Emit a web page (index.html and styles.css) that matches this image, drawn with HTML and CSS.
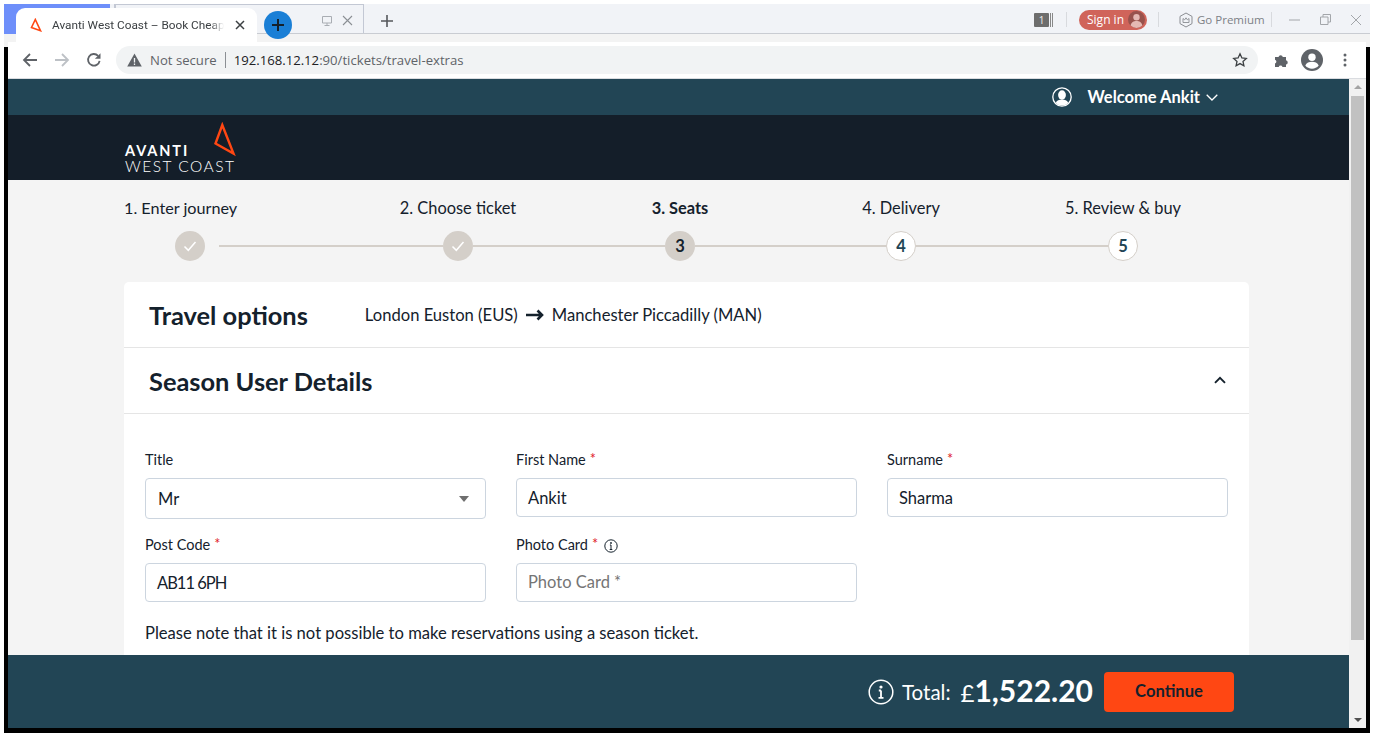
FILE: index.html
```html
<!DOCTYPE html>
<html lang="en">
<head>
    <meta charset="UTF-8">
    <title>Avanti West Coast – Book Cheap Train Tickets</title>
    <link rel="stylesheet" href="styles.css">
</head>
<body>
<div class="window">

    <div class="tabstrip">
        <div class="blue-edge"></div>
        <div class="back-tab">
            <svg class="ico-monitor" width="12" height="12" viewBox="0 0 12 12"><path d="M1.500 1.500h9v6.500h-9zM6 8v2.500M3.500 10.500h5" fill="none" stroke="#a9adb3"/></svg>
            <svg class="ico-x" width="11" height="11" viewBox="0 0 11 11"><path d="M1 1l9 9M10 1l-9 9" stroke="#8b8f94" stroke-width="1.100"/></svg>
        </div>
        <svg class="ico-plus" width="14" height="14" viewBox="0 0 14 14"><path d="M7 1v12M1 7h12" stroke="#55585c" stroke-width="1.600"/></svg>

        <div class="strip-right">
            <div class="count-badge"><span>1</span><i></i><i></i></div>
            <div class="strip-sep"></div>
            <div class="signin">Sign in
                <svg width="17" height="17" viewBox="0 0 17 17"><circle cx="8.500" cy="8.500" r="8.500" fill="#98524c"/><circle cx="8.500" cy="6.300" r="3.200" fill="#e5b9b3"/><path d="M2.600 14.500c.6-3.400 3-4.600 5.900-4.600s5.300 1.200 5.900 4.600a8.500 8.500 0 0 1-11.800 0z" fill="#e5b9b3"/></svg>
            </div>
            <div class="strip-sep sep-b"></div>
            <svg class="ico-premium" width="16" height="16" viewBox="0 0 16 16"><path d="M8 1l6 3.400v7.200L8 15l-6-3.400V4.400z" fill="none" stroke="#8a8d92"/><path d="M5 10.500V6.500l1.700 1.300L8 5.800l1.300 2L11 6.500v4z" fill="none" stroke="#8a8d92" stroke-width=".9"/></svg>
            <span class="premium">Go Premium</span>
            <div class="strip-sep sep-c"></div>
            <svg class="win-min" width="11" height="11" viewBox="0 0 11 11"><path d="M0 6h11" stroke="#a3a6aa"/></svg>
            <svg class="win-max" width="11" height="11" viewBox="0 0 11 11"><path d="M.5 3h7.500v7.500H.5zM3 3V.5h7.500V8H8" fill="none" stroke="#a3a6aa"/></svg>
            <svg class="win-close" width="12" height="12" viewBox="0 0 12 12"><path d="M1 1l10 10M11 1L1 11" stroke="#a3a6aa"/></svg>
        </div>

        <div class="active-tab">
            <svg class="favicon" width="12" height="14" viewBox="0 0 12 14"><path d="M5.300 1.500L1.500 9.500l9 3.200z" fill="none" stroke="#ff4713" stroke-width="1.600"/></svg>
            <span class="tab-title">Avanti West Coast – Book Cheap</span>
            <svg class="tab-close" width="10" height="10" viewBox="0 0 10 10"><path d="M1 1l8 8M9 1L1 9" stroke="#3c4043" stroke-width="1.500"/></svg>
        </div>
        <div class="blue-plus">
            <svg width="14" height="14" viewBox="0 0 14 14"><path d="M7 1v12M1 7h12" stroke="#14212c" stroke-width="2"/></svg>
        </div>
    </div>
    <div class="strip-band"></div>

    <div class="browser">
        <div class="toolbar">
            <svg class="nav-ico" width="16" height="16" viewBox="0 0 16 16"><path d="M15 8H2M8 2L2 8l6 6" fill="none" stroke="#5f6368" stroke-width="1.800"/></svg>
            <svg class="nav-ico" width="16" height="16" viewBox="0 0 16 16"><path d="M1 8h13M8 2l6 6-6 6" fill="none" stroke="#bdc1c6" stroke-width="1.800"/></svg>
            <svg class="nav-ico" width="16" height="16" viewBox="0 0 16 16"><path d="M13.600 8.800A5.800 5.800 0 1 1 12.100 3.800" fill="none" stroke="#5f6368" stroke-width="1.800"/><path d="M14.500 1.200v5.600H8.900z" fill="#5f6368"/></svg>
            <div class="omnibox">
                <svg width="15" height="14" viewBox="0 0 15 14"><path d="M7.500 .5L14.800 13.500H.2z" fill="#5f6368"/><path d="M7.500 5v4.500M7.500 10.500v1.500" stroke="#f1f3f4" stroke-width="1.300"/></svg>
                <span class="not-secure">Not secure</span>
                <span class="omni-sep"></span>
                <span class="url"><b>192.168.12.12</b>:90/tickets/travel-extras</span>
                <svg class="star" width="16" height="16" viewBox="0 0 16 16"><path d="M8 1.800l1.900 4.100 4.400.5-3.300 3 .9 4.400L8 11.600l-3.900 2.200.9-4.400-3.300-3 4.400-.5z" fill="none" stroke="#3c4043" stroke-width="1.300"/></svg>
            </div>
            <svg class="puzzle" width="16" height="16" viewBox="0 0 16 16"><path d="M1 5h3.500a2.200 2.200 0 0 1 4.300 0H12v3.300a2.200 2.200 0 0 1 0 4.300V15H8.500a2 2 0 0 0-3.800 0H1v-3.500a2 2 0 0 0 0-3.800z" fill="#5f6368"/></svg>
            <svg class="avatar" width="22" height="22" viewBox="0 0 22 22"><circle cx="11" cy="11" r="11" fill="#5f6368"/><circle cx="11" cy="8.300" r="3.700" fill="#fff"/><path d="M4.300 16.500c1-2.700 4-3.700 6.700-3.700s5.700 1 6.700 3.700a8.700 8.700 0 0 1-13.400 0z" fill="#fff"/></svg>
            <svg class="dots" width="4" height="14" viewBox="0 0 4 14"><circle cx="2" cy="2" r="1.500" fill="#5f6368"/><circle cx="2" cy="7" r="1.500" fill="#5f6368"/><circle cx="2" cy="12" r="1.500" fill="#5f6368"/></svg>
        </div>

        <div class="viewport">
            <div class="page">
                <div class="topbar">
                    <svg width="20" height="20" viewBox="0 0 20 20"><circle cx="10" cy="10" r="9.200" fill="#224555" stroke="#fff" stroke-width="1.300"/><ellipse cx="10" cy="8" rx="3.900" ry="4.700" fill="#fff"/><path d="M3.700 16c1-2.600 3.500-3.500 6.300-3.500s5.300.9 6.300 3.500a9 9 0 0 1-12.600 0z" fill="#fff"/></svg>
                    <span class="welcome">Welcome Ankit</span>
                    <svg width="12" height="7" viewBox="0 0 12 7"><path d="M.7 .7L6 6l5.300-5.300" fill="none" stroke="#fff" stroke-width="1.300"/></svg>
                </div>
                <div class="brandbar">
                    <div class="logo">
                        <div class="logo-text">
                            <span class="logo-avanti">AVANTI</span>
                            <span class="logo-west">WEST COAST</span>
                        </div>
                        <svg class="logo-mark" width="24" height="36" viewBox="0 0 24 36"><path d="M9.300 3L2.500 21.500 20.500 31.500z" fill="none" stroke="#ff4713" stroke-width="2.400"/></svg>
                    </div>
                </div>

                <div class="content">
                    <div class="steps">
                        <div class="step step-first">
                            <div class="step-label">1. Enter journey</div>
                            <div class="step-track">
                                <span class="dot done"><svg width="14" height="12" viewBox="0 0 14 12"><path d="M1.500 6.500l3.800 3.800L12.500 2" fill="none" stroke="#fff" stroke-width="1.500"/></svg></span>
                                <span class="line"></span>
                            </div>
                        </div>
                        <div class="step">
                            <div class="step-label">2. Choose ticket</div>
                            <div class="step-track">
                                <span class="line"></span>
                                <span class="dot done"><svg width="14" height="12" viewBox="0 0 14 12"><path d="M1.500 6.500l3.800 3.800L12.500 2" fill="none" stroke="#fff" stroke-width="1.500"/></svg></span>
                                <span class="line"></span>
                            </div>
                        </div>
                        <div class="step step-current">
                            <div class="step-label current">3. Seats</div>
                            <div class="step-track">
                                <span class="line"></span>
                                <span class="dot active">3</span>
                                <span class="line"></span>
                            </div>
                        </div>
                        <div class="step">
                            <div class="step-label">4. Delivery</div>
                            <div class="step-track">
                                <span class="line"></span>
                                <span class="dot todo">4</span>
                                <span class="line"></span>
                            </div>
                        </div>
                        <div class="step">
                            <div class="step-label">5. Review &amp; buy</div>
                            <div class="step-track">
                                <span class="line"></span>
                                <span class="dot todo">5</span>
                                <span class="line blank"></span>
                            </div>
                        </div>
                    </div>

                    <div class="card">
                        <div class="card-row">
                            <h2>Travel options</h2>
                            <div class="route">
                                <span>London Euston (EUS)</span>
                                <svg width="18" height="12" viewBox="0 0 18 12"><path d="M0 6h16M11.500 1.500L16 6l-4.500 4.500" fill="none" stroke="#14212c" stroke-width="2.600"/></svg>
                                <span>Manchester Piccadilly (MAN)</span>
                            </div>
                        </div>
                        <div class="card-row row-between">
                            <h2>Season User Details</h2>
                            <svg class="collapse" width="12" height="8" viewBox="0 0 12 8"><path d="M1 6.800l5-5 5 5" fill="none" stroke="#14212c" stroke-width="1.900"/></svg>
                        </div>
                        <form class="form">
                            <div class="field">
                                <label>Title</label>
                                <div class="input select"><span>Mr</span><i class="caret"></i></div>
                            </div>
                            <div class="field">
                                <label>First Name <em>*</em></label>
                                <div class="input">Ankit</div>
                            </div>
                            <div class="field">
                                <label>Surname <em>*</em></label>
                                <div class="input">Sharma</div>
                            </div>
                            <div class="field">
                                <label>Post Code <em>*</em></label>
                                <div class="input tight">AB11 6PH</div>
                            </div>
                            <div class="field">
                                <label>Photo Card <em>*</em>
                                    <svg class="label-info" width="14" height="14" viewBox="0 0 14 14"><circle cx="7" cy="7" r="6.200" fill="none" stroke="#14212c"/><path d="M7 6v4.300M5.700 10.500h2.600M5.900 6h1.100" fill="none" stroke="#14212c"/><circle cx="7" cy="4" r=".9" fill="#14212c"/></svg>
                                </label>
                                <div class="input placeholder">Photo Card *</div>
                            </div>
                            <p class="note">Please note that it is not possible to make reservations using a season ticket.</p>
                        </form>
                    </div>
                </div>

                <div class="totalbar">
                    <svg width="26" height="26" viewBox="0 0 26 26"><circle cx="13" cy="13" r="11.800" fill="none" stroke="#fff" stroke-width="1.500"/><circle cx="13" cy="8" r="1.600" fill="#fff"/><path d="M13 11.500v7M10.500 18.800h5M10.800 11.500H13" fill="none" stroke="#fff" stroke-width="1.800"/></svg>
                    <span class="total-label">Total:</span>
                    <span class="total-amount"><span class="pound">£</span>1,522.20</span>
                    <button class="continue" type="button">Continue</button>
                </div>
            </div>

            <div class="scrollbar">
                <i class="arrow-up"></i>
                <div class="thumb"></div>
                <i class="arrow-down"></i>
            </div>
        </div>
    </div>
</div>
</body>
</html>
```

FILE: styles.css
```css
* { box-sizing: border-box; }
html, body { margin: 0; height: 100%; overflow: hidden; background: #fff; }
body { font-family: "Lato", "Open Sans", sans-serif; color: #14212c; padding: 4px 4px 3px 4px; }
svg { display: block; flex: none; }
.window { width: 1366px; height: 729px; display: flex; flex-direction: column; }

/* tab strip */
.tabstrip { position: relative; height: 30px; flex: none; display: flex; background: #f1f3f7; border-bottom: 1px solid #c9ccd2; font-family: "Open Sans", sans-serif; }
.blue-edge { width: 106px; height: 30px; background: #6e8ffa; }
.back-tab { width: 250px; margin-left: 4px; border: 1px solid #c3c8d4; border-bottom: 0; border-left-width: 2px; display: flex; align-items: center; padding: 3px 0 0 205px; gap: 9px; }
.ico-plus { margin: 10px 0 0 16px; }
.strip-right { margin-left: auto; display: flex; align-items: center; height: 29px; padding: 2px 8px 0 0; }
.count-badge { display: flex; gap: 1px; align-items: stretch; height: 14px; margin-right: 13px; }
.count-badge span { width: 15px; background: #6d6d6d; color: #eee; font-size: 10px; line-height: 14px; text-align: center; border-radius: 1px; }
.count-badge i { width: 1px; background: #888; }
.strip-sep { width: 1px; height: 15px; background: #d8dade; }
.signin { width: 68px; height: 20px; margin-left: 12px; padding: 0 2px 0 8px; background: #d0645a; color: #fff; border-radius: 10px; font-size: 12px; display: flex; align-items: center; justify-content: space-between; }
.sep-b { margin-left: 11px; }
.ico-premium { margin-left: 19px; }
.premium { font-size: 11.500px; color: #7d8186; margin-left: 3px; width: 67px; white-space: nowrap; }
.sep-c { margin-left: 7px; }
.win-min { margin-left: 17px; }
.win-max { margin-left: 20px; }
.win-close { margin-left: 19px; }

.active-tab { position: absolute; left: 12px; top: 4px; width: 241px; height: 34px; background: #fff; border-radius: 9px 9px 0 0; display: flex; align-items: center; padding-left: 14px; z-index: 2; }
.favicon { margin-right: 10px; }
.tab-title { width: 172px; font-family: "Roboto", sans-serif; font-size: 11.800px; color: #3c4043; white-space: nowrap; -webkit-mask-image: linear-gradient(90deg, #000 92%, transparent); mask-image: linear-gradient(90deg, #000 92%, transparent); }
.tab-close { margin-left: 11px; }
.blue-plus { position: absolute; left: 260px; top: 7px; width: 28px; height: 28px; border-radius: 50%; background: #1a7fd6; display: flex; align-items: center; justify-content: center; z-index: 2; }
.strip-band { height: 8px; flex: none; background: #f3f3f3; }

/* toolbar + black frame */
.browser { flex: 1; min-height: 0; display: flex; flex-direction: column; padding: 0 4px 5px; background: linear-gradient(#f3f3f3 0 5px, #000 5px); }
.toolbar { height: 37px; flex: none; background: #fff; border-bottom: 1px solid #dadce0; display: flex; align-items: center; padding-left: 14px; font-family: "Open Sans", sans-serif; }
.nav-ico { margin-right: 16px; }
.omnibox { width: 1142px; height: 28px; margin-left: -2px; background: #f1f3f4; border-radius: 14px; display: flex; align-items: center; padding: 0 10px 0 11px; font-size: 13.150px; }
.not-secure { color: #5f6368; margin-left: 8px; }
.omni-sep { width: 1px; height: 16px; background: #8b8f94; margin: 0 8px; }
.url { color: #5f6368; }
.url b { font-weight: 400; color: #202124; }
.star { margin-left: auto; }
.puzzle { margin-left: 16px; }
.avatar { margin-left: 11px; }
.dots { margin-left: 20px; }

.viewport { flex: 1; min-height: 0; display: flex; }
.page { width: 1341px; display: flex; flex-direction: column; background: #f4f4f4; }

/* site header */
.topbar { height: 36px; flex: none; background: #224555; color: #fff; display: flex; align-items: center; padding-right: 131px; justify-content: flex-end; }
.welcome { font-weight: 700; font-size: 16.500px; line-height: 18px; margin: 0 6px 0 15px; }
.brandbar { height: 65px; flex: none; background: #141e29; padding-left: 117px; color: #fff; }
.logo { display: flex; width: 112px; height: 65px; position: relative; }
.logo-text { display: flex; flex-direction: column; margin-top: 27px; }
.logo-avanti { font-weight: 700; font-size: 14.500px; line-height: 17px; letter-spacing: 1.900px; }
.logo-west { font-weight: 300; font-size: 15.500px; line-height: 15px; letter-spacing: 1.500px; white-space: nowrap; }
.logo-mark { position: absolute; left: 88px; top: 7px; }

/* stepper */
.content { flex: 1; min-height: 0; overflow: hidden; padding: 0 100px 0 116px; }
.steps { display: flex; height: 102px; padding-top: 17px; }
.step { width: 222px; }
.step-first { width: 223px; }
.step-current { margin-right: -1px; }
.step-label { height: 21px; font-size: 16.400px; line-height: 21px; text-align: center; white-space: nowrap; }
.step-first .step-label { font-size: 16.200px; text-align: left; }
.step-label.current { font-weight: 700; }
.step-track { display: flex; align-items: center; margin-top: 13px; }
.step-first .step-track { padding-left: 51px; }
.step-first .dot { margin-right: 14px; }
.line { flex: 1; height: 2px; background: #d4cfc9; }
.line.blank { background: none; }
.dot { width: 30px; height: 30px; border-radius: 50%; flex: none; display: flex; align-items: center; justify-content: center; font-weight: 700; font-size: 16.500px; }
.dot.done, .dot.active { background: #d4cfc9; }
.dot.todo { background: #fff; border: 1px solid #d4cfc9; color: #224555; }

/* card */
.card { width: 1125px; background: #fff; border-radius: 5px 5px 0 0; }
.card-row { height: 66px; display: flex; align-items: center; padding: 0 23px 0 25px; border-bottom: 1px solid #e5e5e5; }
.row-between { justify-content: space-between; }
.collapse { margin-top: -2px; }
.card-row h2 { margin: 0; font-size: 25.400px; font-weight: 700; line-height: 30px; white-space: nowrap; }
.route { display: flex; align-items: center; gap: 8px; margin-left: 57px; font-size: 16.600px; }
.form { display: grid; grid-template-columns: repeat(3, 341px); column-gap: 30px; padding: 36px 0 30px 21px; }
.field { height: 85px; display: flex; flex-direction: column; }
.field label { height: 20px; margin-bottom: 8px; font-size: 14.500px; line-height: 20px; display: flex; align-items: center; gap: 4px; }
.field em { color: #e0202a; font-style: normal; margin-top: -3px; }
.label-info { margin-left: 2px; margin-top: 1px; }
.input { height: 39px; border: 1px solid #ccd5df; border-radius: 4px; padding: 1px 11px 0; font-size: 16.500px; line-height: 37px; }
.select { height: 41px; line-height: 39px; padding: 1px 12px 0; display: flex; align-items: center; justify-content: space-between; }
.tight { letter-spacing: -1px; }
.caret { width: 0; height: 0; border-left: 5.500px solid transparent; border-right: 5.500px solid transparent; border-top: 6px solid #6f6f6f; margin-right: 4px; }
.placeholder { color: #757575; padding-top: 0; }
.note { grid-column: 1 / -1; margin: 2px 0 0; font-size: 16.600px; line-height: 22px; white-space: nowrap; }

/* total */
.totalbar { height: 73px; flex: none; background: #224555; color: #fff; display: flex; align-items: center; justify-content: flex-end; padding-right: 115px; }
.total-label { font-size: 20.500px; margin: 0 10px 0 8px; }
.total-amount { font-size: 30px; font-weight: 700; line-height: 40px; margin-right: 11px; }
.pound { font-size: 24px; font-weight: 400; }
.continue { width: 130px; height: 40px; border: 0; border-radius: 4px; padding: 0 0 2px; background: #ff4713; color: #14212c; font-family: inherit; font-weight: 700; font-size: 16.600px; cursor: pointer; }

/* scrollbar */
.scrollbar { width: 17px; background: #f1f1f1; display: flex; flex-direction: column; align-items: center; }
.thumb { width: 13px; height: 544px; margin-top: 7px; background: #c1c1c1; }
.arrow-up { margin-top: 6px; width: 0; height: 0; border-left: 4px solid transparent; border-right: 4px solid transparent; border-bottom: 4px solid #a3a3a3; }
.arrow-down { margin-top: auto; margin-bottom: 6px; width: 0; height: 0; border-left: 4px solid transparent; border-right: 4px solid transparent; border-top: 4px solid #505050; }
```
